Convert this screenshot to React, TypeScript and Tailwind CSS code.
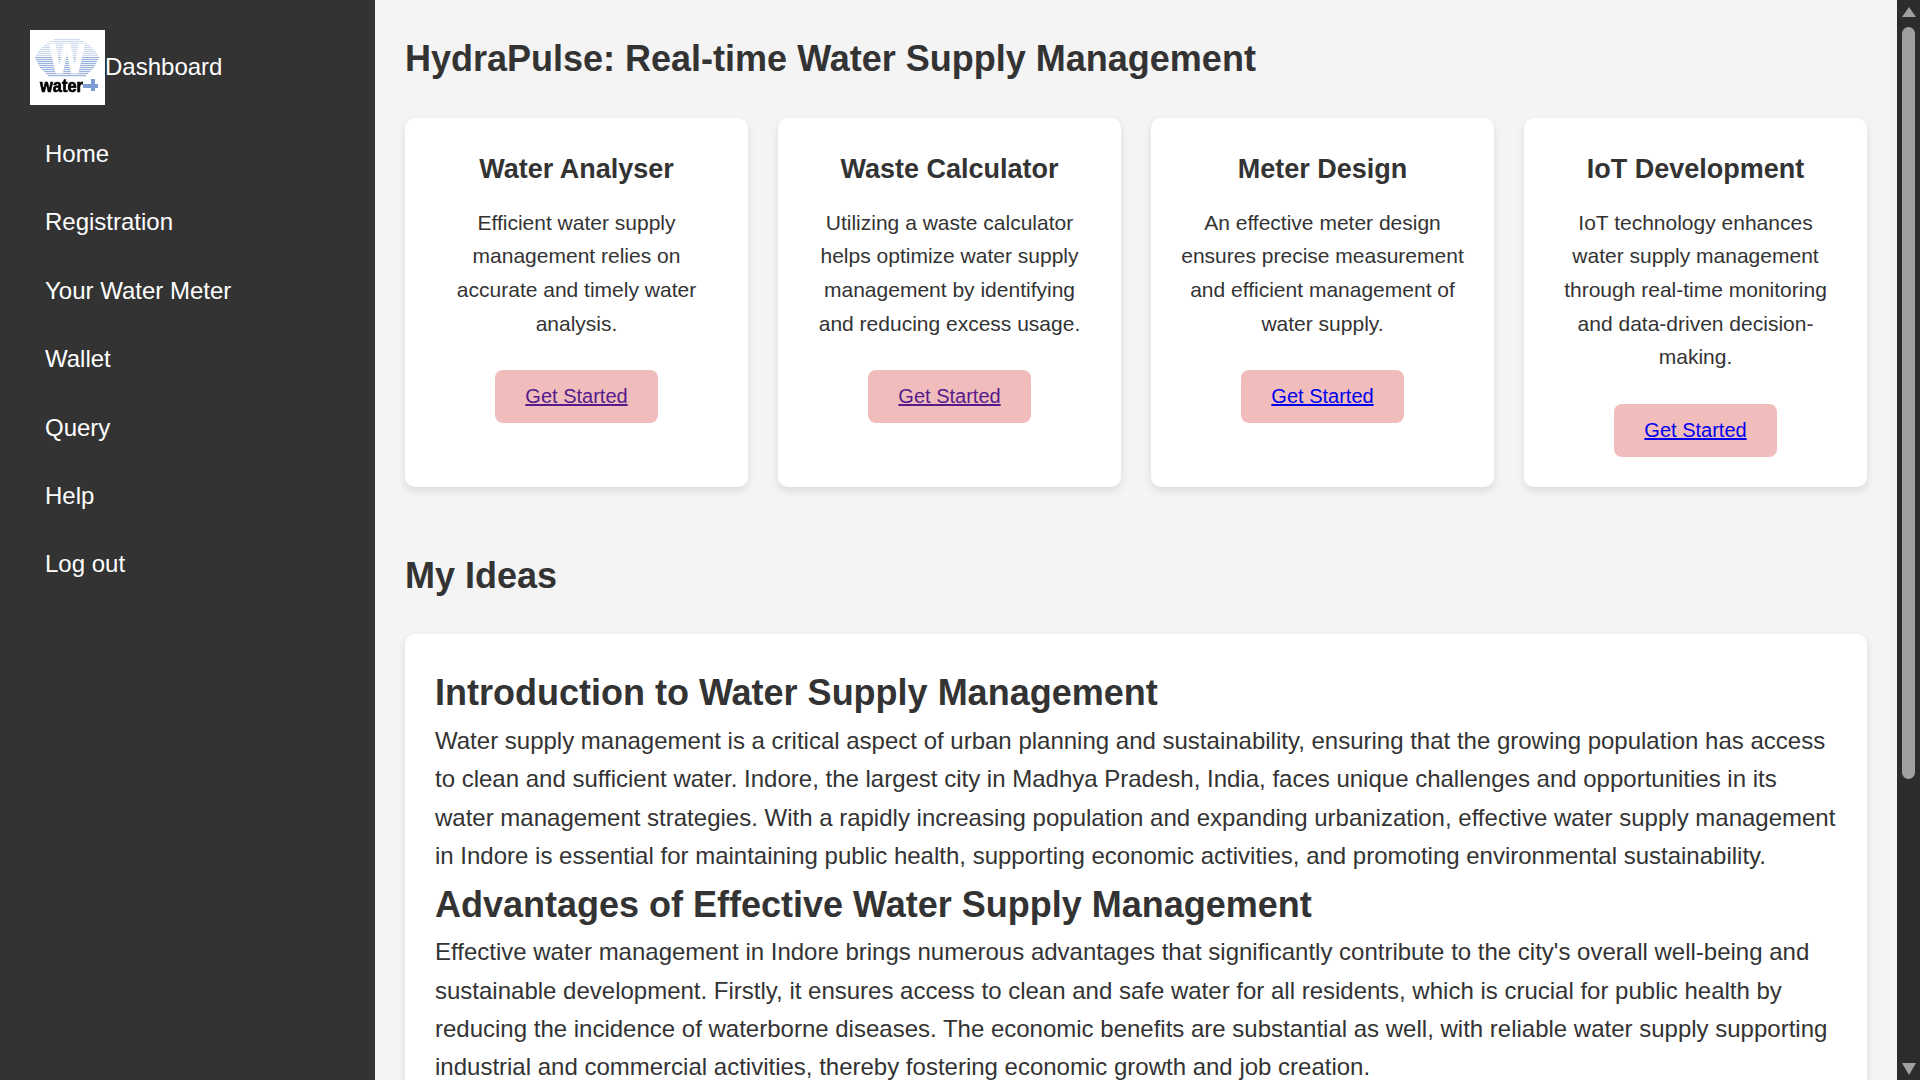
const navItems = ["Home", "Registration", "Your Water Meter", "Wallet", "Query", "Help", "Log out"];

const cards = [
  {
    title: "Water Analyser",
    text: "Efficient water supply management relies on accurate and timely water analysis.",
    visited: true,
  },
  {
    title: "Waste Calculator",
    text: "Utilizing a waste calculator helps optimize water supply management by identifying and reducing excess usage.",
    visited: true,
  },
  {
    title: "Meter Design",
    text: "An effective meter design ensures precise measurement and efficient management of water supply.",
    visited: false,
  },
  {
    title: "IoT Development",
    text: "IoT technology enhances water supply management through real-time monitoring and data-driven decision-making.",
    visited: false,
  },
];

// y, x, width of each stripe of the logo's wave shape
const stripes = [
  [9, 24, 26], [11, 20, 34], [13, 17, 40], [15, 14, 46], [17, 12, 50], [19, 10, 54], [21, 8, 58], [23, 7, 60],
  [25, 6, 62], [27, 5, 64], [29, 6, 62], [31, 7, 60], [33, 8, 58], [35, 9, 56], [37, 10, 54], [39, 12, 50],
  [41, 14, 46], [43, 16, 42], [45, 18, 38],
];

function Logo() {
  return (
    <svg viewBox="0 0 75 75" className="h-[75px] w-[75px] shrink-0 bg-white">
      <defs>
        <filter id="soft" x="-10%" y="-10%" width="120%" height="120%">
          <feGaussianBlur stdDeviation="0.45" />
        </filter>
      </defs>
      <g filter="url(#soft)">
        {stripes.map(([y, x, w]) => (
          <rect key={y} x={x} y={y} width={w} height="1.2" fill={y > 26 ? "#9db4dc" : "#cfdaec"} />
        ))}
        <text x="37" y="43" textAnchor="middle" fontFamily="Liberation Sans" fontWeight="700" fontSize="42" textLength="35" lengthAdjust="spacingAndGlyphs" fill="#fff" stroke="#fff" strokeWidth="1">W</text>
        <text x="10" y="62" fontFamily="Liberation Sans" fontWeight="700" fontSize="18" textLength="43" lengthAdjust="spacingAndGlyphs" stroke="#000" strokeWidth="0.7" fill="#000">water</text>
        <rect x="53" y="54" width="15" height="4" fill="#7e9bd3" />
        <rect x="61" y="49" width="4" height="12" fill="#7e9bd3" />
      </g>
    </svg>
  );
}

export default function App() {
  return (
    <div className="flex h-screen overflow-hidden bg-[#f4f4f4] font-['Liberation_Sans',Arial,sans-serif] text-[#333]">
      <aside className="w-[375px] shrink-0 bg-[#333] p-[30px] text-white">
        <div className="mb-[15px] flex items-center text-[24px]">
          <Logo />
          <span className="pb-[2px]">Dashboard</span>
        </div>
        <nav className="flex flex-col">
          {navItems.map((item) => (
            <a key={item} className="p-[15px] text-[24px] leading-[38.4px]">
              {item}
            </a>
          ))}
        </nav>
      </aside>
      <main className="min-w-0 flex-1 overflow-hidden p-[30px]">
        <h1 className="mb-[30px] text-[36px] font-bold leading-[57.6px]">HydraPulse: Real-time Water Supply Management</h1>
        <div className="grid grid-cols-4 gap-[30px]">
          {cards.map((card) => (
            <div key={card.title} className="rounded-[10px] bg-white p-[30px] text-center shadow-[0_4px_8px_rgba(0,0,0,0.1)]">
              <h3 className="mb-[15px] text-[27px] font-bold leading-[43.2px]">{card.title}</h3>
              <p className="text-[21px] leading-[33.6px]">{card.text}</p>
              <a
                href="#"
                className={`mt-[30px] inline-block rounded-[8px] bg-[#f0bcbc] px-[30px] py-[10px] text-[20px] leading-[33px] underline ${card.visited ? "text-[#551a8b]" : "text-[#0000ee]"}`}
              >
                Get Started
              </a>
            </div>
          ))}
        </div>
        <h2 className="mb-[30px] mt-[60px] text-[36px] font-bold leading-[57.6px]">My Ideas</h2>
        <div className="rounded-[10px] bg-white p-[30px] shadow-[0_4px_8px_rgba(0,0,0,0.1)]">
          <h3 className="text-[36px] font-bold leading-[57.6px]">Introduction to Water Supply Management</h3>
          <p className="text-[24px] leading-[38.4px]">
            Water supply management is a critical aspect of urban planning and sustainability, ensuring that the growing population has access to clean and sufficient water. Indore, the largest city in Madhya Pradesh, India, faces unique challenges and opportunities in its water management strategies. With a rapidly increasing population and expanding urbanization, effective water supply management in Indore is essential for maintaining public health, supporting economic activities, and promoting environmental sustainability.
          </p>
          <h3 className="text-[36px] font-bold leading-[57.6px]">Advantages of Effective Water Supply Management</h3>
          <p className="text-[24px] leading-[38.4px]">
            Effective water management in Indore brings numerous advantages that significantly contribute to the city's overall well-being and sustainable development. Firstly, it ensures access to clean and safe water for all residents, which is crucial for public health by reducing the incidence of waterborne diseases. The economic benefits are substantial as well, with reliable water supply supporting industrial and commercial activities, thereby fostering economic growth and job creation.
          </p>
        </div>
      </main>
      <div className="flex w-[23px] shrink-0 flex-col items-center bg-[#2c2c2c] pb-[5px] pt-[7px]">
        <div className="h-0 w-0 border-x-[7.5px] border-b-[10px] border-x-transparent border-b-[#a0a0a0]" />
        <div className="mt-[10px] h-[752px] w-[13px] rounded-full bg-[#a0a0a0]" />
        <div className="mt-auto h-0 w-0 border-x-[7.5px] border-t-[12px] border-x-transparent border-t-[#a0a0a0]" />
      </div>
    </div>
  );
}
